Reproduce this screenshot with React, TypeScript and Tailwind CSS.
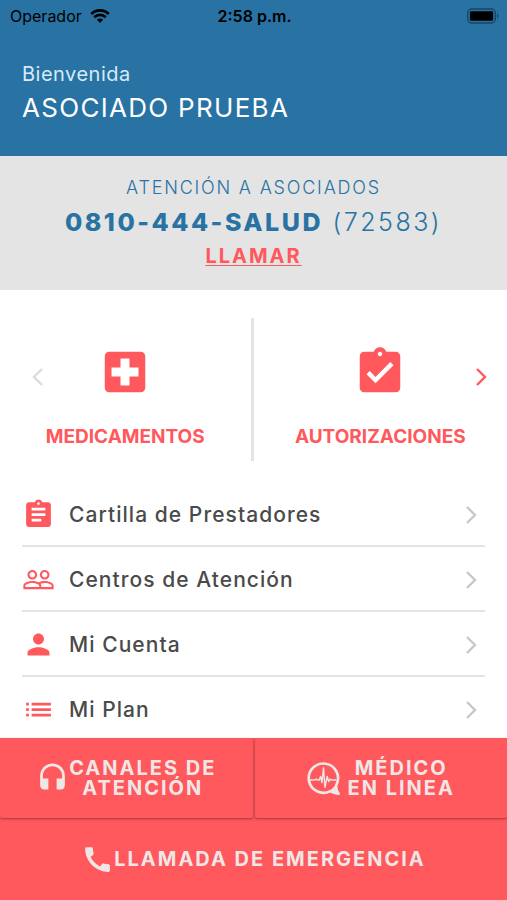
import { ReactNode } from "react";
import {
  MdAssignment,
  MdAssignmentTurnedIn,
  MdCall,
  MdHeadset,
  MdList,
  MdLocalHospital,
  MdPerson,
} from "react-icons/md";

const PeopleIcon = () => (
  <svg viewBox="0 0 24 24" className="size-[33px]" fill="currentColor" aria-hidden="true">
    <path d="M16.5 13c-1.2 0-3.07.34-4.5 1-1.43-.67-3.3-1-4.5-1C5.33 13 1 14.08 1 16.25V19h22v-2.75c0-2.17-4.33-3.25-6.5-3.25zm-4 4.5h-10v-1.25c0-.54 2.56-1.75 5-1.75s5 1.21 5 1.75v1.25zm9 0H14v-1.25c0-.46-.2-.86-.52-1.22.88-.3 1.96-.53 3.02-.53 2.44 0 5 1.21 5 1.75v1.25zM7.5 12c1.93 0 3.5-1.57 3.5-3.5S9.43 5 7.5 5 4 6.57 4 8.5 5.57 12 7.5 12zm0-5.5c1.1 0 2 .9 2 2s-.9 2-2 2-2-.9-2-2 .9-2 2-2zm9 5.5c1.93 0 3.5-1.57 3.5-3.5S18.43 5 16.5 5 13 6.57 13 8.5s1.57 3.5 3.5 3.5zm0-5.5c1.1 0 2 .9 2 2s-.9 2-2 2-2-.9-2-2 .9-2 2-2z" />
  </svg>
);

// Speech bubble with a heartbeat line
const PulseBubbleIcon = () => (
  <svg viewBox="0 0 32 32" className="size-[33px] shrink-0" fill="none" stroke="currentColor" aria-hidden="true">
    <path
      d="M28.4 22.4A14.2 14.2 0 1 0 22.6 28.2C25 29.6 28 30.8 30.6 30.6C28.8 28.4 27.9 25.6 28.4 22.4Z"
      strokeWidth="2.6"
      strokeLinejoin="round"
    />
    <path d="M28 22 31 31.4 22 28.2Z" fill="currentColor" stroke="none" />
    <path
      d="M3 17.5h4.5l1.5-1 1.2 1h1.6l1.4-3.5 1.3 6L16 5.5l1.4 19 2.2-10.5 1.4 5 1.4-2.5 1.3 1h5"
      strokeWidth="1.4"
      strokeLinejoin="round"
    />
  </svg>
);

const WifiIcon = () => (
  <svg viewBox="0 0 20 14" className="h-3.5 w-5" aria-label="Wi-Fi">
    <path d="M10 14 6.9 10.8a4.4 4.4 0 0 1 6.2 0Z" fill="#000" />
    <path d="M4.3 8.2a8.1 8.1 0 0 1 11.4 0M1.3 5a12.4 12.4 0 0 1 17.4 0" fill="none" stroke="#000" strokeWidth="2.8" />
  </svg>
);

const BatteryIcon = () => (
  <svg viewBox="0 0 33 16" className="h-4 w-8" aria-label="Batería">
    <rect x="0.8" y="0.8" width="28.4" height="14.4" rx="4" fill="none" stroke="#000" strokeOpacity="0.4" strokeWidth="1.4" />
    <rect x="3" y="3" width="24" height="10" rx="1.5" fill="#000" />
    <path d="M31 5.5c2 .8 2 4.2 0 5Z" fill="#000" fillOpacity="0.4" />
  </svg>
);

const Chevron = ({ left = false }: { left?: boolean }) => (
  <svg viewBox="0 0 12 20" className="h-5 w-3" fill="none" stroke="currentColor" strokeWidth="2.4" aria-hidden="true">
    <path d={left ? "M10 2 2 10l8 8" : "M2 2l8 8-8 8"} />
  </svg>
);

const menuItems: { label: string; icon: ReactNode }[] = [
  { label: "Cartilla de Prestadores", icon: <MdAssignment className="size-[33px]" /> },
  { label: "Centros de Atención", icon: <PeopleIcon /> },
  { label: "Mi Cuenta", icon: <MdPerson className="size-[33px]" /> },
  { label: "Mi Plan", icon: <MdList className="size-[33px]" /> },
];

const Shortcut = ({ label, icon }: { label: string; icon: ReactNode }) => (
  <button type="button" className="flex w-full flex-col items-center gap-6 pt-[27px] text-[#ff585d]">
    {icon}
    <span className="text-[19px] leading-7 font-bold">{label}</span>
  </button>
);

const App = () => {
  return (
    <div className="flex min-h-screen flex-col bg-white font-['Inter',sans-serif]">
      {/* HEADER */}
      <header className="bg-[#2873a3] pb-8">
        <div className="grid grid-cols-3 items-center pt-1 pr-2 pl-2.5 text-black">
          <div className="flex items-center gap-2">
            <span className="text-base">Operador</span>
            <WifiIcon />
          </div>
          <span className="text-center text-base font-semibold">2:58 p.m.</span>
          <div className="flex justify-end">
            <BatteryIcon />
          </div>
        </div>
        <div className="px-[22px] pt-8 text-white">
          <p className="text-xl leading-7 tracking-wide text-[#d5eafa]">Bienvenida</p>
          <h1 className="pt-1 text-[26px] leading-8 tracking-wider">ASOCIADO PRUEBA</h1>
        </div>
      </header>

      {/* CONTACT */}
      <section className="flex flex-col items-center bg-[#e4e4e4] pt-5 pb-5 text-[#2873a3]">
        <p className="text-lg leading-6 font-light tracking-widest">ATENCIÓN A ASOCIADOS</p>
        <p className="pt-1 text-[25px] leading-9 tracking-widest">
          <strong className="font-extrabold">0810-444-SALUD</strong> <span className="font-light">(72583)</span>
        </p>
        <a href="tel:081044472583" className="pt-0.5 text-xl leading-7 font-bold tracking-widest text-[#ff585d] underline decoration-1 underline-offset-2">
          LLAMAR
        </a>
      </section>

      <main className="flex-1">
        {/* SHORTCUTS */}
        <section className="relative grid grid-cols-2 pt-7 pb-[21px]">
          <div className="border-r-3 border-[#e4e4e4] pb-2.5">
            <Shortcut label="MEDICAMENTOS" icon={<MdLocalHospital className="size-[54px]" />} />
          </div>
          <Shortcut label="AUTORIZACIONES" icon={<MdAssignmentTurnedIn className="size-[54px]" />} />
          <button type="button" aria-label="Anterior" className="absolute top-[77px] left-8 text-[#dcdcdc]">
            <Chevron left />
          </button>
          <button type="button" aria-label="Siguiente" className="absolute top-[77px] right-5 text-[#ff585d]">
            <Chevron />
          </button>
        </section>

        {/* MENU */}
        <nav className="px-[22px]">
          {menuItems.map((item) => (
            <a
              key={item.label}
              href="#"
              className="flex items-center gap-3.5 border-b-2 border-[#e4e4e4] pt-4 pb-3.5 text-[#ff585d] last:border-b-0 last:pb-3"
            >
              {item.icon}
              <span className="flex-1 text-[21px] leading-8 font-medium tracking-wider text-[#4a4a4a]">{item.label}</span>
              <span className="px-2 text-[#c8c8c8]">
                <Chevron />
              </span>
            </a>
          ))}
        </nav>
      </main>

      {/* ACTIONS */}
      <footer className="bg-[#ff585d] text-xl leading-5 font-bold tracking-widest text-[#f0e6e6]">
        <div className="grid grid-cols-2 gap-0.5">
          <button type="button" className="flex h-20 items-center justify-center rounded-xs shadow-sm shadow-black/30">
            <MdHeadset className="size-[33px] shrink-0" />
            <span>
              CANALES DE
              <br />
              ATENCIÓN
            </span>
          </button>
          <button type="button" className="flex h-20 items-center justify-center gap-2 rounded-xs shadow-sm shadow-black/30">
            <PulseBubbleIcon />
            <span>
              MÉDICO
              <br />
              EN LINEA
            </span>
          </button>
        </div>
        <button type="button" className="flex h-[82px] w-full items-center justify-center">
          <MdCall className="size-[33px] shrink-0" />
          LLAMADA DE EMERGENCIA
        </button>
      </footer>
    </div>
  );
};

export default App;
